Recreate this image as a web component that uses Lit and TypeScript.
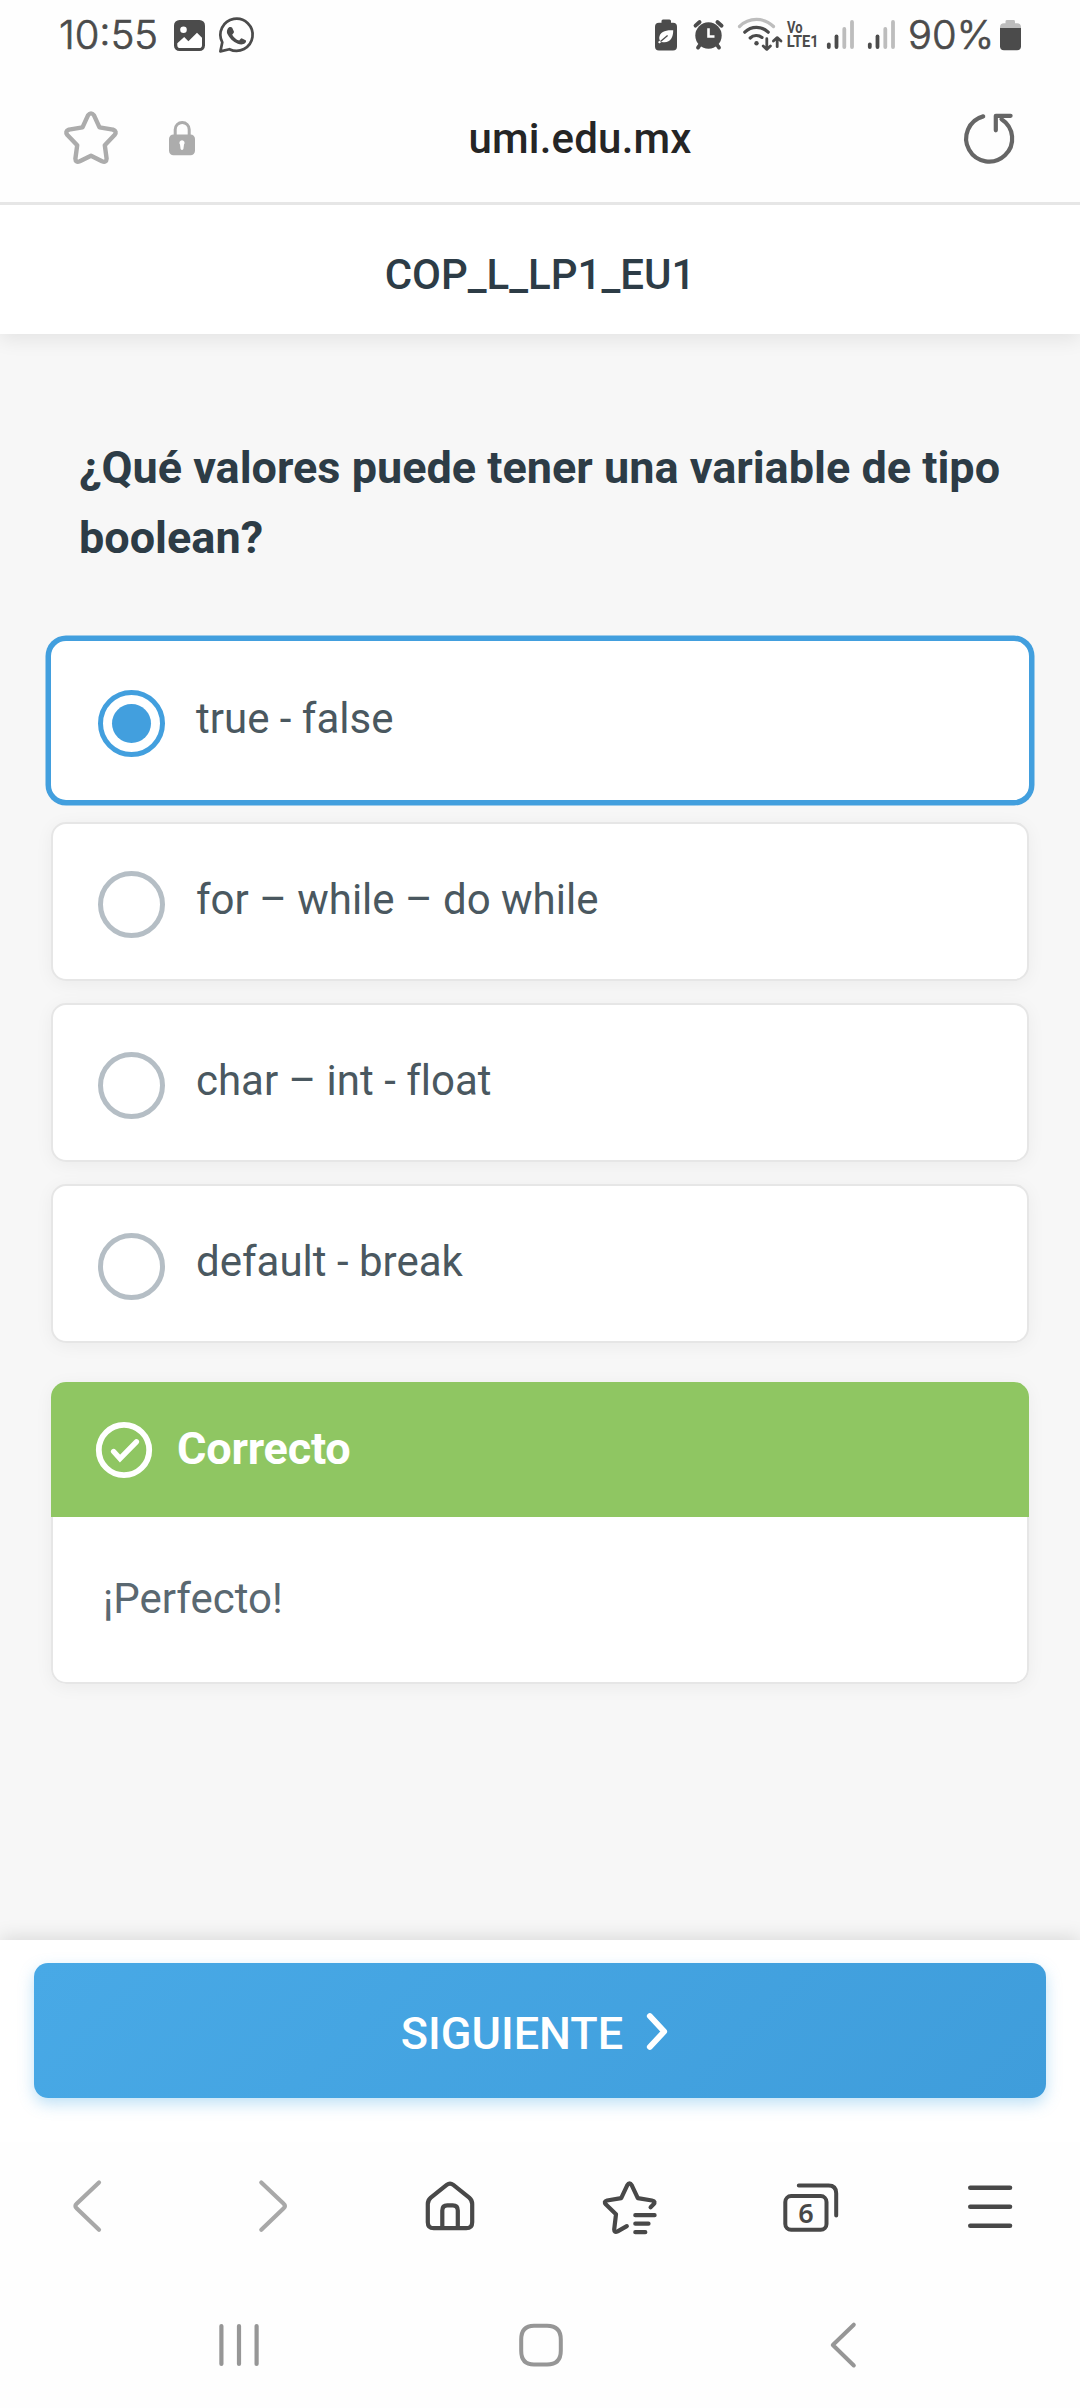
import { LitElement, html, css, svg } from "lit";
import { customElement, property, state } from "lit/decorators.js";
import { classMap } from "lit/directives/class-map.js";

/* Icons are drawn on the page's own pixel grid: viewBox = "x y width height". */
const icon = (x: number, y: number, w: number, h: number, body: unknown) => html`
  <svg width=${w} height=${h} viewBox="${x} ${y} ${w} ${h}" fill="none" aria-hidden="true">${body}</svg>
`;

@customElement("status-bar")
export class StatusBar extends LitElement {
  static styles = css`
    :host {
      display: flex;
      justify-content: space-between;
      height: 70px;
      padding: 0 58px 0 55px;
    }
    svg { display: block; flex: none; }
    .group { display: flex; }
    .digits { font: 300 39px Inter, sans-serif; fill: #4b4b4b; stroke: #4b4b4b; stroke-width: 0.7px; }
    .lte { font: 700 16.5px Roboto, sans-serif; fill: #4b4b4b; }
  `;

  private signal(x: number) {
    return icon(x, 0, 41, 70, svg`
      <g stroke-width="3.8" stroke-linecap="round">
        <path d="M${x + 4.8} 44.5V47" stroke="#4b4b4b"/>
        <path d="M${x + 12.5} 36.5V47" stroke="#4b4b4b"/>
        <path d="M${x + 20.3} 29V47M${x + 28} 22V47" stroke="#bdbdbd"/>
      </g>`);
  }

  render() {
    return html`
      <div class="group">
        ${icon(55, 0, 115, 70, svg`
          <text class="digits" x="59" y="49" textLength="99" lengthAdjust="spacingAndGlyphs">10:55</text>`)}
        ${icon(170, 0, 45, 70, svg`
          <rect x="174" y="20" width="31" height="31" rx="5.5" fill="#4b4b4b"/>
          <circle cx="183.5" cy="29.7" r="3.3" fill="#fff"/>
          <path d="M177.3 43.2 184.2 36.9 188.4 41.2 197 32.8 202 37.8V45.2Q202 48 199.2 48H180.1Q177.3 48 177.3 45.2Z" fill="#fff"/>`)}
        ${icon(215, 0, 45, 70, svg`
          <path d="M222.3 42.3A16.1 16.1 0 1 1 229.4 49.2L220.4 51.4Z" stroke="#4b4b4b" stroke-width="2.7" stroke-linejoin="round"/>
          <path d="M229.5 27.1C230.5 26.7 231.7 26.8 232.2 27.8L233.9 31.4C234.2 32.1 233.8 32.8 232.2 34.7C233.9 37.6 236 39.4 239.2 40.6C240.8 38.7 241.3 38.1 242.1 38.4L245.6 40.2C246.5 40.7 246 42.3 245.1 43.1C243.4 44.8 240.6 44.9 237.8 43.8C233 41.9 229.2 38.1 227.3 33.8C226.3 31 227.6 28 229.5 27.1Z" fill="#4b4b4b"/>`)}
      </div>
      <div class="group">
        ${icon(652, 0, 38, 70, svg`
          <path d="M661.5 22.8V21Q661.5 19.5 663 19.5H669.4Q671 19.5 671 21V22.8H673Q677 22.8 677 26.8V46.5Q677 50.5 673 50.5H659Q655 50.5 655 46.5V26.8Q655 22.8 659 22.8Z" fill="#4b4b4b"/>
          <path d="M673.2 30.3C666 29.8 659.8 31.4 659.2 37.8C659.1 38.8 659.5 39.6 660 40.4L658 42L659.2 43.6L661.6 41.9C669.8 43.8 673.3 38 673.2 30.3Z" fill="#fff"/>
          <path d="M660.5 41.5 667.6 35.4" stroke="#4b4b4b" stroke-width="1.3"/>`)}
        ${icon(690, 0, 44, 70, svg`
          <circle cx="708.5" cy="35.5" r="13.2" fill="#4b4b4b"/>
          <path d="M695.5 25.7 699.6 22M721.6 25.7 717.4 22" stroke="#4b4b4b" stroke-width="3.8" stroke-linecap="round"/>
          <path d="M700.5 44 698 47.6M716.5 44 719 47.6" stroke="#4b4b4b" stroke-width="3.8" stroke-linecap="round"/>
          <path d="M708.5 28.3V36.5H714.5" stroke="#fff" stroke-width="2.6"/>`)}
        ${icon(734, 0, 51, 70, svg`
          <g stroke-width="3.2" stroke-linecap="round">
            <path d="M739.5 26.5A24 24 0 0 1 773.5 26.5" stroke="#bdbdbd"/>
            <path d="M744.8 32.2A16.6 16.6 0 0 1 768.2 32.2" stroke="#4b4b4b"/>
            <path d="M750.2 38A9 9 0 0 1 762 37.4" stroke="#4b4b4b"/>
          </g>
          <circle cx="756.5" cy="43.3" r="2.2" fill="#4b4b4b"/>
          <g stroke="#4b4b4b" stroke-width="2.8" stroke-linecap="round" stroke-linejoin="round">
            <path d="M766.8 38.7V49M763.2 46 766.8 49.4 770.4 46"/>
            <path d="M777.2 46.7V38M773.4 41 777.2 37.6 781 41"/>
          </g>`)}
        ${icon(785, 0, 39, 70, svg`
          <text class="lte" x="787" y="33.3" textLength="15.5" lengthAdjust="spacingAndGlyphs">Vo</text>
          <text class="lte" x="786.7" y="47.2" textLength="32" lengthAdjust="spacingAndGlyphs">LTE1</text>`)}
        ${this.signal(824)}
        ${this.signal(865)}
        ${icon(906, 0, 90, 70, svg`
          <text class="digits" x="908" y="49" textLength="86" lengthAdjust="spacingAndGlyphs">90%</text>`)}
        ${icon(996, 0, 26, 70, svg`
          <path d="M1005.5 23.2V21.4Q1005.5 20 1007 20H1013.6Q1015 20 1015 21.4V23.2H1017Q1021 23.2 1021 27.2V28.3H1000V27.2Q1000 23.2 1004 23.2Z" fill="#bdbdbd"/>
          <path d="M1000 28H1021V46.3Q1021 50.3 1017 50.3H1004Q1000 50.3 1000 46.3Z" fill="#4b4b4b"/>`)}
      </div>
    `;
  }
}

@customElement("address-bar")
export class AddressBar extends LitElement {
  static styles = css`
    :host {
      display: flex;
      height: 132px;
      border-bottom: 3px solid #e6e6e6;
      font-family: Roboto, sans-serif;
    }
    svg { display: block; flex: none; }
    .actions { display: flex; box-sizing: border-box; width: 220px; padding-left: 55px; }
    .host {
      flex: 1;
      padding: 45px 15px 0 0;
      text-align: center;
      line-height: 48px;
      font-size: 42px;
      font-weight: 500;
      color: #252525;
      letter-spacing: 0.2px;
    }
    .reload { width: 125px; }
  `;

  render() {
    return html`
      <div class="actions">
        ${icon(55, 70, 110, 132, svg`
          <path d="M88 115.3Q91 111.5 94 115.3L99.5 127.3 112.9 129.6Q117.5 131.4 114.5 135L104.8 145.2 106.6 158.6Q106.4 163 102 161.3L91 155.7 79.8 161.3Q75.5 163 75.4 158.6L77.2 145.2 67.4 135Q64.5 131.4 69 129.6L82.5 127.3Z" stroke="#acacac" stroke-width="4.4" stroke-linejoin="round"/>`)}
        ${icon(165, 70, 40, 132, svg`
          <path d="M175.2 137V129.5A7 7 0 0 1 189.2 129.5V137" stroke="#acacac" stroke-width="3"/>
          <rect x="169" y="134.5" width="26" height="20.8" rx="4.5" fill="#acacac"/>
          <path d="M182 140.2A2.7 2.7 0 0 1 184 144.6L183.4 149Q182 151 180.6 149L180 144.6A2.7 2.7 0 0 1 182 140.2Z" fill="#fff"/>`)}
      </div>
      <div class="host">umi.edu.mx</div>
      <div class="reload">
        ${icon(955, 70, 70, 132, svg`
          <path d="M983.2 116.4A23 23 0 1 0 1001.5 119.2" stroke="#666" stroke-width="4.2" stroke-linecap="round"/>
          <path d="M1010.6 115.8H995.8V130.3" stroke="#666" stroke-width="4.2" stroke-linecap="round" stroke-linejoin="round"/>`)}
      </div>
    `;
  }
}

@customElement("answer-option")
export class AnswerOption extends LitElement {
  static styles = css`
    :host { display: block; }
    .card {
      display: flex;
      align-items: center;
      gap: 31px;
      box-sizing: border-box;
      height: 159px;
      padding-left: 45px;
      background: #fff;
      border: 2px solid #e6e6e6;
      border-radius: 15px;
      box-shadow: 0 3px 18px rgba(0, 0, 0, 0.05);
      cursor: pointer;
    }
    .card.selected {
      border-color: #fff;
      box-shadow: 0 0 0 5.5px #429fde;
    }
    .radio {
      display: grid;
      place-items: center;
      box-sizing: border-box;
      width: 67px;
      height: 67px;
      margin-top: 6px;
      border: 5.5px solid #b5bec5;
      border-radius: 50%;
    }
    .selected .radio { border-color: #429fde; }
    .dot { width: 39.5px; height: 39.5px; border-radius: 50%; background: #429fde; }
    .label {
      margin-bottom: 4px;
      font: 400 42px/60px Roboto, sans-serif;
      font-variant-ligatures: none;
      color: #4a5860;
    }
  `;

  @property() label = "";
  @property({ type: Boolean }) selected = false;

  render() {
    return html`
      <div class=${classMap({ card: true, selected: this.selected })} role="radio" aria-checked=${this.selected}>
        <div class="radio">${this.selected ? html`<div class="dot"></div>` : null}</div>
        <div class="label">${this.label}</div>
      </div>
    `;
  }
}

@customElement("feedback-card")
export class FeedbackCard extends LitElement {
  static styles = css`
    :host { display: block; font-family: Roboto, sans-serif; }
    .card {
      background: #fff;
      border-radius: 15px;
      box-shadow: 0 3px 18px rgba(0, 0, 0, 0.05);
    }
    .head {
      display: flex;
      align-items: center;
      gap: 23px;
      height: 135px;
      padding-left: 43px;
      background: #8fc662;
      border-radius: 15px 15px 0 0;
      color: #fff;
      font-size: 45px;
      font-weight: 700;
    }
    svg { display: block; }
    .title { line-height: 60px; margin-bottom: 2px; letter-spacing: -0.2px; }
    .body {
      box-sizing: border-box;
      height: 167px;
      padding: 52px 50px;
      border: 2px solid #e6e6e6;
      border-top: 0;
      border-radius: 0 0 15px 15px;
      font-size: 42px;
      line-height: 60px;
      color: #5a6871;
    }
  `;

  render() {
    return html`
      <div class="card">
        <div class="head">
          ${icon(94, 1420, 60, 60, svg`
            <circle cx="124" cy="1450" r="25.2" stroke="#fff" stroke-width="5.8"/>
            <path d="M113.6 1451.5 120 1458.6 136.4 1441.8" stroke="#fff" stroke-width="5.4" stroke-linecap="round"/>`)}
          <div class="title">Correcto</div>
        </div>
        <div class="body">¡Perfecto!</div>
      </div>
    `;
  }
}

@customElement("browser-toolbar")
export class BrowserToolbar extends LitElement {
  static styles = css`
    :host { display: block; }
    svg { display: block; flex: none; }
    .row { display: flex; }
    .tools { padding-left: 60px; gap: 100px; }
    .system { padding-left: 200px; gap: 222px; }
    .count { font: 600 27px "Noto Sans", sans-serif; fill: #484848; }
  `;

  render() {
    const dark = "#484848";
    return html`
      <div class="row tools">
        ${icon(60, 2142, 80, 130, svg`
          <path d="M99 2182.5 76.6 2203.8Q74.2 2206 76.6 2208.2L99 2229.8" stroke="#a8a8a8" stroke-width="4.2" stroke-linecap="round"/>`)}
        ${icon(240, 2142, 80, 130, svg`
          <path d="M261.3 2182.5 283.7 2203.8Q286.2 2206 283.7 2208.2L261.3 2229.8" stroke="#a8a8a8" stroke-width="4.2" stroke-linecap="round"/>`)}
        ${icon(420, 2142, 80, 130, svg`
          <g stroke=${dark} stroke-width="4.2" stroke-linejoin="round">
            <path d="M446.7 2184.9Q450 2182.3 453.3 2184.9L469.2 2197.6Q472.2 2200.2 472.2 2204V2222.2Q472.2 2228.2 466.2 2228.2H433.8Q427.8 2228.2 427.8 2222.2V2204Q427.8 2200.2 430.8 2197.6Z"/>
            <path d="M442.3 2228V2210.5Q442.3 2205.3 447.3 2205.3H452.7Q457.8 2205.3 457.8 2210.5V2228"/>
          </g>`)}
        ${icon(600, 2142, 80, 130, svg`
          <g stroke=${dark} stroke-width="4.2" stroke-linecap="round" stroke-linejoin="round">
            <path d="M650.6 2207.2 653.3 2204.6Q656.3 2201.2 652 2200.5L637.8 2198.1 631.8 2185.4Q629.5 2181.4 627.2 2185.4L621.2 2198.1 607 2200.5Q603.2 2201.4 606 2204.6L616 2214.2 614.2 2229.4Q614.2 2233 617.6 2231.4L626.8 2226.1"/>
            <path d="M635.3 2215.2H654.6M635.3 2223.7H648.5M635.3 2232.2H645.3"/>
          </g>`)}
        ${icon(780, 2142, 80, 130, svg`
          <g stroke=${dark} stroke-width="4" stroke-linecap="round">
            <rect x="785.3" y="2196.1" width="41.2" height="33.6" rx="5.8"/>
            <path d="M798.8 2185.5H828.5Q836.2 2185.5 836.2 2193.2V2215.5"/>
          </g>
          <text class="count" x="806" y="2222.7" text-anchor="middle">6</text>`)}
        ${icon(960, 2142, 80, 130, svg`
          <path d="M970.3 2187.7H1010M970.3 2206.7H1010M970.3 2225.7H1010" stroke=${dark} stroke-width="4.6" stroke-linecap="round"/>`)}
      </div>
      <div class="row system">
        ${icon(200, 2272, 78, 136, svg`
          <path d="M221.4 2326V2364M239 2326V2364M256.6 2326V2364" stroke="#969696" stroke-width="4.2" stroke-linecap="round"/>`)}
        ${icon(500, 2272, 78, 136, svg`
          <path d="M534 2325.7H547Q560.8 2325.7 560.8 2339.5V2350.7Q560.8 2364.5 547 2364.5H534Q521.2 2364.5 521.2 2350.7V2339.5Q521.2 2325.7 534 2325.7Z" stroke="#969696" stroke-width="4"/>`)}
        ${icon(800, 2272, 78, 136, svg`
          <path d="M853.8 2324.7 832.8 2345 853.8 2365.5" stroke="#969696" stroke-width="4" stroke-linecap="round" stroke-linejoin="round"/>`)}
      </div>
    `;
  }
}

@customElement("app-root")
export class AppRoot extends LitElement {
  static styles = css`
    :host {
      display: flex;
      flex-direction: column;
      width: 1080px;
      height: 2408px;
      overflow: hidden;
      background: #fefefe;
      font-family: Roboto, sans-serif;
    }
    .quiz-title {
      position: relative;
      box-sizing: border-box;
      height: 129px;
      padding-top: 40px;
      background: #fff;
      box-shadow: 0 6px 18px rgba(0, 0, 0, 0.08);
      clip-path: inset(0 0 -40px 0);
      text-align: center;
      font-size: 42px;
      font-weight: 500;
      line-height: 60px;
      color: #2d3c46;
    }
    .quiz {
      box-sizing: border-box;
      height: 1606px;
      padding: 99px 51px 0;
      background: #f7f7f7;
    }
    .question {
      margin: 0 0 68px;
      padding: 0 28px;
      font-size: 45px;
      font-weight: 700;
      line-height: 70px;
      color: #2d3c46;
    }
    .options { display: flex; flex-direction: column; gap: 22px; margin-bottom: 39px; }
    .footer {
      position: relative;
      box-sizing: border-box;
      height: 202px;
      padding: 23px 34px 0;
      background: #fff;
      box-shadow: 0 -3px 18px rgba(0, 0, 0, 0.12);
    }
    .next {
      display: flex;
      justify-content: center;
      gap: 21px;
      box-sizing: border-box;
      width: 1012px;
      height: 135px;
      padding: 39px 7px 0 0;
      border: 0;
      border-radius: 14px;
      background: linear-gradient(135deg, #48a9e6, #3f9ddb);
      box-shadow: 0 6px 15px rgba(72, 169, 230, 0.35);
      color: #fff;
      font: 500 45px/64px Roboto, sans-serif;
    }
    .next svg { display: block; }
    browser-toolbar { background: #fefefe; position: relative; }
  `;

  @state() private choice = 0;

  private readonly answers = ["true - false", "for – while – do while", "char – int - float", "default - break"];

  render() {
    return html`
      <status-bar></status-bar>
      <address-bar></address-bar>
      <header class="quiz-title">COP_L_LP1_EU1</header>
      <main class="quiz">
        <h1 class="question">¿Qué valores puede tener una variable de tipo boolean?</h1>
        <div class="options" role="radiogroup">
          ${this.answers.map(
            (a, i) => html`<answer-option .label=${a} .selected=${i === this.choice} @click=${() => (this.choice = i)}></answer-option>`
          )}
        </div>
        <feedback-card></feedback-card>
      </main>
      <footer class="footer">
        <button class="next">
          <span>SIGUIENTE</span>
          ${icon(645, 2001, 28, 60, svg`
            <path d="M650.8 2015 665.2 2030.5 650.8 2046" stroke="#fff" stroke-width="5.8" stroke-linecap="round" stroke-linejoin="round"/>`)}
        </button>
      </footer>
      <browser-toolbar></browser-toolbar>
    `;
  }
}
